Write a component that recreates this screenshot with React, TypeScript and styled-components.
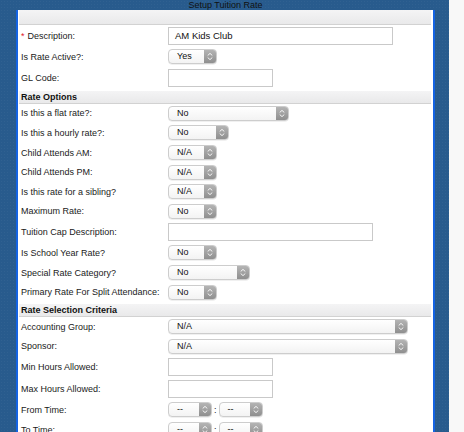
import styled, { createGlobalStyle } from "styled-components";

type Field = {
  label: string;
  kind: "input" | "select" | "time";
  width: number;
  value?: string;
  required?: boolean;
};

type Section = { title: string; fields: Field[] };

const SECTIONS: Section[] = [
  {
    title: "",
    fields: [
      { label: "Description:", kind: "input", width: 225, value: "AM Kids Club", required: true },
      { label: "Is Rate Active?:", kind: "select", width: 49, value: "Yes" },
      { label: "GL Code:", kind: "input", width: 105 },
    ],
  },
  {
    title: "Rate Options",
    fields: [
      { label: "Is this a flat rate?:", kind: "select", width: 121, value: "No" },
      { label: "Is this a hourly rate?:", kind: "select", width: 61, value: "No" },
      { label: "Child Attends AM:", kind: "select", width: 49, value: "N/A" },
      { label: "Child Attends PM:", kind: "select", width: 49, value: "N/A" },
      { label: "Is this rate for a sibling?", kind: "select", width: 49, value: "N/A" },
      { label: "Maximum Rate:", kind: "select", width: 49, value: "No" },
      { label: "Tuition Cap Description:", kind: "input", width: 205 },
      { label: "Is School Year Rate?", kind: "select", width: 49, value: "No" },
      { label: "Special Rate Category?", kind: "select", width: 82, value: "No" },
      { label: "Primary Rate For Split Attendance:", kind: "select", width: 49, value: "No" },
    ],
  },
  {
    title: "Rate Selection Criteria",
    fields: [
      { label: "Accounting Group:", kind: "select", width: 240, value: "N/A" },
      { label: "Sponsor:", kind: "select", width: 240, value: "N/A" },
      { label: "Min Hours Allowed:", kind: "input", width: 105 },
      { label: "Max Hours Allowed:", kind: "input", width: 105 },
      { label: "From Time:", kind: "time", width: 44, value: "--" },
      { label: "To Time:", kind: "time", width: 44, value: "--" },
    ],
  },
];

const GlobalStyle = createGlobalStyle`
  html, body {
    margin: 0;
    padding: 0;
    height: 100%;
    overflow: hidden;
    background: #f8f8f8;
  }
  body {
    font-family: "Liberation Sans", Arial, Helvetica, sans-serif;
    font-size: 9px;
    color: #1a1a1a;
  }
`;

const Page = styled.div`
  display: flex;
  width: 464px;
  height: 432px;
  overflow: hidden;
  background: #f8f8f8;
`;

const Backdrop = styled.div`
  width: 449px;
  flex-shrink: 0;
  background-color: #285b8d;
  background-image: radial-gradient(rgba(255, 255, 255, 0.04) 1px, transparent 1px);
  background-size: 3px 3px;
  padding-left: 16px;
  box-sizing: border-box;
`;

const SideStrip = styled.div`
  width: 15px;
  flex-shrink: 0;
  background: #f8f8f8;
`;

const Column = styled.div`
  width: 419px;
`;

const Title = styled.div`
  height: 10px;
  line-height: 10px;
  text-align: center;
  color: #111;
  font-size: 9px;
`;

const Panel = styled.div`
  background: #fff;
  border-left: 2px solid #1463e3;
  border-right: 2px solid #1463e3;
  padding: 0 2px 20px 1px;
  min-height: 440px;
`;

const SectionBar = styled.div<{ $first?: boolean }>`
  margin-top: ${({ $first }) => ($first ? "0" : "2px")};
  height: ${({ $first }) => ($first ? "14px" : "12px")};
  line-height: 12px;
  padding-left: 2px;
  background: linear-gradient(#f4f4f5, #e9e9ea);
  border-bottom: 1px solid #d2d2d2;
  font-weight: bold;
  color: #111;
`;

const Row = styled.div<{ $tall?: boolean }>`
  display: flex;
  align-items: center;
  height: ${({ $tall }) => ($tall ? "22px" : "19.6px")};
`;

const Label = styled.div`
  width: 147px;
  padding-left: 2px;
  flex-shrink: 0;
  white-space: nowrap;
`;

const Required = styled.span`
  color: #e0141e;
  margin-right: 3px;
`;

const TextBox = styled.div<{ $w: number }>`
  width: ${({ $w }) => $w}px;
  height: 18px;
  box-sizing: border-box;
  border: 1px solid #c9c9c9;
  padding-left: 6px;
  line-height: 16px;
  font-size: 9.5px;
  color: #111;
`;

const SelectBox = styled.div<{ $w: number }>`
  width: ${({ $w }) => $w}px;
  height: 15px;
  box-sizing: border-box;
  display: flex;
  border: 1px solid #cdcdcd;
  border-radius: 4px;
  overflow: hidden;
  background: linear-gradient(#ffffff, #f3f3f3);
  box-shadow: 0 0.5px 0.5px rgba(0, 0, 0, 0.12);
`;

const SelectValue = styled.div`
  flex: 1;
  padding-left: 8px;
  line-height: 13px;
  color: #111;
  white-space: nowrap;
  overflow: hidden;
`;

const SelectButton = styled.div`
  width: 12px;
  flex-shrink: 0;
  display: flex;
  align-items: center;
  justify-content: center;
  background: linear-gradient(#b4b4b4, #8f8f8f);
`;

const TimeGroup = styled.div`
  display: flex;
  align-items: center;
  gap: 2px;
`;

const Colon = styled.span`
  color: #111;
`;

const Chevrons = () => (
  <svg width="6" height="9" viewBox="0 0 6 9" fill="none">
    <path d="M1 3.2 L3 1.4 L5 3.2" stroke="#fff" strokeWidth="0.9" strokeLinecap="round" strokeLinejoin="round" />
    <path d="M1 5.8 L3 7.6 L5 5.8" stroke="#fff" strokeWidth="0.9" strokeLinecap="round" strokeLinejoin="round" />
  </svg>
);

const Select = ({ width, value }: { width: number; value?: string }) => (
  <SelectBox $w={width}>
    <SelectValue>{value}</SelectValue>
    <SelectButton>
      <Chevrons />
    </SelectButton>
  </SelectBox>
);

const Control = ({ field }: { field: Field }) => {
  if (field.kind === "input") return <TextBox $w={field.width}>{field.value}</TextBox>;
  if (field.kind === "time")
    return (
      <TimeGroup>
        <Select width={field.width} value={field.value} />
        <Colon>:</Colon>
        <Select width={field.width} value={field.value} />
      </TimeGroup>
    );
  return <Select width={field.width} value={field.value} />;
};

const App = () => (
  <>
    <GlobalStyle />
    <Page>
      <Backdrop>
        <Column>
          <Title>Setup Tuition Rate</Title>
          <Panel>
            {SECTIONS.map((section, i) => (
              <div key={section.title || "top"}>
                <SectionBar $first={i === 0}>{section.title}</SectionBar>
                {section.fields.map((field) => (
                  <Row key={field.label} $tall={field.kind === "input"}>
                    <Label>
                      {field.required && <Required>*</Required>}
                      {field.label}
                    </Label>
                    <Control field={field} />
                  </Row>
                ))}
              </div>
            ))}
          </Panel>
        </Column>
      </Backdrop>
      <SideStrip />
    </Page>
  </>
);

export default App;
